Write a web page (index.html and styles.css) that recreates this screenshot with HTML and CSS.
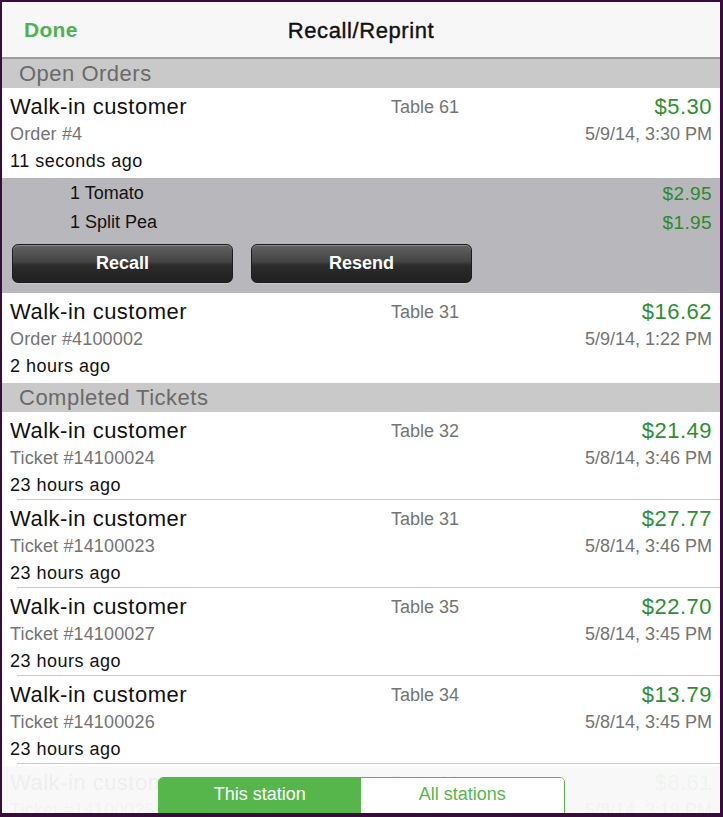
FILE: index.html
```html
<!DOCTYPE html>
<html>
<head>
<meta charset="utf-8">
<link rel="stylesheet" href="styles.css">
</head>
<body>
<div class="screen">
  <header class="navbar">
    <span class="done">Done</span>
    <h1 class="title">Recall/Reprint</h1>
  </header>
  <div class="list">
    <div class="section">Open Orders</div>
    <div class="row row-open">
      <span class="name">Walk-in customer</span><span class="table">Table 61</span><span class="price">$5.30</span>
      <span class="num">Order #4</span><span class="date">5/9/14, 3:30 PM</span>
      <span class="ago">11 seconds ago</span>
    </div>
    <div class="detail">
      <div class="item"><span>1 Tomato</span><span class="item-price">$2.95</span></div>
      <div class="item"><span>1 Split Pea</span><span class="item-price">$1.95</span></div>
      <div class="actions">
        <button class="btn">Recall</button>
        <button class="btn">Resend</button>
      </div>
    </div>
    <div class="row row-open">
      <span class="name">Walk-in customer</span><span class="table">Table 31</span><span class="price">$16.62</span>
      <span class="num">Order #4100002</span><span class="date">5/9/14, 1:22 PM</span>
      <span class="ago">2 hours ago</span>
    </div>
    <div class="section">Completed Tickets</div>
    <div class="row">
      <span class="name">Walk-in customer</span><span class="table">Table 32</span><span class="price">$21.49</span>
      <span class="num">Ticket #14100024</span><span class="date">5/8/14, 3:46 PM</span>
      <span class="ago">23 hours ago</span>
    </div>
    <div class="row">
      <span class="name">Walk-in customer</span><span class="table">Table 31</span><span class="price">$27.77</span>
      <span class="num">Ticket #14100023</span><span class="date">5/8/14, 3:46 PM</span>
      <span class="ago">23 hours ago</span>
    </div>
    <div class="row">
      <span class="name">Walk-in customer</span><span class="table">Table 35</span><span class="price">$22.70</span>
      <span class="num">Ticket #14100027</span><span class="date">5/8/14, 3:45 PM</span>
      <span class="ago">23 hours ago</span>
    </div>
    <div class="row">
      <span class="name">Walk-in customer</span><span class="table">Table 34</span><span class="price">$13.79</span>
      <span class="num">Ticket #14100026</span><span class="date">5/8/14, 3:45 PM</span>
      <span class="ago">23 hours ago</span>
    </div>
    <div class="row">
      <span class="name">Walk-in customer</span><span class="table">Table 33</span><span class="price">$8.61</span>
      <span class="num">Ticket #14100025</span><span class="date">5/8/14, 3:19 PM</span>
      <span class="ago">23 hours ago</span>
    </div>
  </div>
  <div class="toolbar">
    <div class="segmented">
      <span class="seg seg-on">This station</span>
      <span class="seg">All stations</span>
    </div>
  </div>
</div>
</body>
</html>
```
FILE: styles.css
```css
* { box-sizing: border-box; }
html, body { margin: 0; padding: 0; }
body {
  background: #3a0c3a;
  width: 723px;
  height: 817px;
  padding: 2px 3px 4px 2px;
  font-family: "Liberation Sans", Arial, sans-serif;
  overflow: hidden;
}
.screen {
  position: relative;
  width: 718px;
  height: 811px;
  background: #ffffff;
  overflow: hidden;
}
.navbar {
  height: 57px;
  background: #f7f7f8;
  border-bottom: 2px solid #9c9c9c;
  display: flex;
  align-items: center;
  justify-content: center;
  position: relative;
}
.done {
  position: absolute;
  left: 22px;
  top: 16px;
  font-size: 21px;
  font-weight: bold;
  letter-spacing: 0.3px;
  color: #4fb24f;
}
.title {
  margin: 0;
  font-size: 22px;
  font-weight: normal;
  letter-spacing: 0.6px;
  color: #111;
  -webkit-text-stroke: 0.4px #111;
  padding-top: 2px;
}
.section {
  height: 29px;
  line-height: 29px;
  padding-left: 17px;
  background: #c9c9c9;
  color: #6a6a6a;
  font-size: 22px;
  letter-spacing: 0.5px;
}
.row {
  display: grid;
  grid-template-columns: 381px 1fr auto;
  grid-template-rows: 28px 27px 27px;
  align-items: center;
  height: 88px;
  padding: 5px 8px 0 8px;
  background: linear-gradient(#c8c8c8, #c8c8c8) no-repeat 15px 100% / calc(100% - 15px) 1px, #fff;
}
.row-open {
  height: 90px;
  background: #fff;
}
.name {
  font-size: 22px;
  letter-spacing: 0.5px;
  color: #111;
}
.table {
  font-size: 18px;
  color: #747474;
}
.price {
  font-size: 22px;
  letter-spacing: 0.5px;
  color: #2e8f31;
  text-align: right;
}
.num {
  grid-column: 1 / 3;
  font-size: 18px;
  letter-spacing: 0.15px;
  color: #747474;
}
.date {
  grid-column: 3;
  font-size: 18px;
  color: #747474;
  text-align: right;
}
.ago {
  grid-column: 1 / 4;
  font-size: 18px;
  letter-spacing: 0.5px;
  color: #111;
}
.detail {
  height: 115px;
  background: #b8b8bc;
  padding: 1px 8px 0 10px;
}
.item {
  display: flex;
  justify-content: space-between;
  align-items: center;
  height: 29px;
  padding-left: 58px;
  font-size: 18px;
  color: #111;
}
.item-price {
  font-size: 19px;
  letter-spacing: 0.4px;
  color: #2c8a2e;
}
.actions {
  display: flex;
  gap: 18px;
  margin-top: 7px;
}
.btn {
  width: 221px;
  height: 39px;
  border: 1px solid #1c1c1c;
  border-radius: 6px;
  background: linear-gradient(#626262 0%, #444 45%, #2c2c2c 55%, #202020 100%);
  box-shadow: inset 0 1px 0 rgba(255,255,255,0.25), 0 1px 0 rgba(255,255,255,0.2);
  color: #fff;
  font-family: "Liberation Sans", Arial, sans-serif;
  font-size: 18px;
  font-weight: bold;
  padding: 0;
}
.toolbar {
  position: absolute;
  left: 0;
  right: 0;
  bottom: 0;
  height: 47px;
  background: rgba(248, 248, 248, 0.96);
  display: flex;
  justify-content: center;
  padding-top: 11px;
}
.segmented {
  display: flex;
  width: 407px;
  height: 40px;
  border: 1px solid #57b64b;
  border-radius: 5px;
  overflow: hidden;
}
.seg {
  flex: 1;
  text-align: center;
  line-height: 33px;
  font-size: 18px;
  color: #57b64b;
  background: #fff;
}
.seg-on {
  background: #57b64b;
  color: #fff;
}
```
